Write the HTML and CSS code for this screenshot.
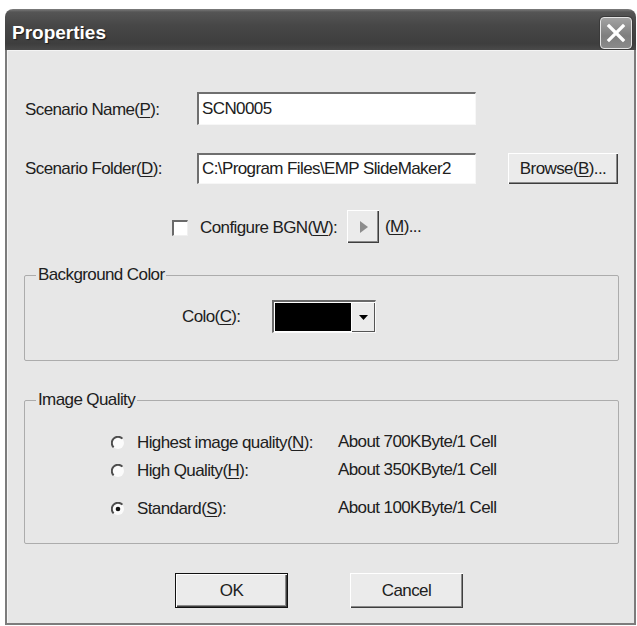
FILE: index.html
```html
<!DOCTYPE html>
<html lang="en">
<head>
<meta charset="utf-8">
<title>Properties</title>
<link rel="stylesheet" href="styles.css">
</head>
<body>
<div class="window">
  <div class="titlebar">
    <span class="title">Properties</span>
    <button class="close" type="button" aria-label="Close">
      <svg width="30" height="30" viewBox="0 0 30 30">
        <path d="M8 8 L22 22 M22 8 L8 22" stroke="#fff" stroke-width="3.2" stroke-linecap="square" fill="none"/>
      </svg>
    </button>
  </div>

  <div class="client">
    <div class="fields">
      <span class="lbl">Scenario Name(<u>P</u>):</span>
      <div class="edit">SCN0005</div>
      <span></span>
      <span class="lbl">Scenario Folder(<u>D</u>):</span>
      <div class="edit">C:\Program Files\EMP SlideMaker2</div>
      <button class="btn browse" type="button">Browse(<u>B</u>)...</button>
    </div>

    <div class="bgm-row">
      <span class="checkbox"></span>
      <span class="lbl bgm-label">Configure BGN(<u>W</u>):</span>
      <button class="btn play" type="button" aria-label="Play">
        <svg width="10" height="14" viewBox="0 0 10 14"><path d="M1 1 L9 7 L1 13 Z" fill="#8c8c8c"/></svg>
      </button>
      <span class="lbl">(<u>M</u>)...</span>
    </div>

    <fieldset class="group group-color">
      <legend>Background Color</legend>
      <div class="color-row">
        <span class="lbl color-label">Colo(<u>C</u>):</span>
        <div class="combo">
          <span class="swatch"></span>
          <span class="drop">
            <svg width="9" height="5" viewBox="0 0 9 5"><path d="M0 0 H9 L4.5 5 Z" fill="#000"/></svg>
          </span>
        </div>
      </div>
    </fieldset>

    <fieldset class="group group-quality">
      <legend>Image Quality</legend>
      <div class="quality">
        <span class="option">
          <svg class="radio" width="14" height="14" viewBox="0 0 14 14"><circle cx="7" cy="7" r="6" fill="#fbfbfb"/><path d="M11.4 2.6 A6.2 6.2 0 0 0 2.6 11.4" stroke="#4e4e4e" stroke-width="2" fill="none"/></svg>
          <span class="lbl">Highest image quality(<u>N</u>):</span>
        </span>
        <span class="lbl size">About 700KByte/1 Cell</span>
        <span class="option">
          <svg class="radio" width="14" height="14" viewBox="0 0 14 14"><circle cx="7" cy="7" r="6" fill="#fbfbfb"/><path d="M11.4 2.6 A6.2 6.2 0 0 0 2.6 11.4" stroke="#4e4e4e" stroke-width="2" fill="none"/></svg>
          <span class="lbl">High Quality(<u>H</u>):</span>
        </span>
        <span class="lbl size">About 350KByte/1 Cell</span>
        <span class="option">
          <svg class="radio" width="14" height="14" viewBox="0 0 14 14"><circle cx="7" cy="7" r="6" fill="#fbfbfb"/><path d="M11.4 2.6 A6.2 6.2 0 0 0 2.6 11.4" stroke="#4e4e4e" stroke-width="2" fill="none"/><circle cx="7" cy="7" r="2.3" fill="#111"/></svg>
          <span class="lbl">Standard(<u>S</u>):</span>
        </span>
        <span class="lbl size">About 100KByte/1 Cell</span>
      </div>
    </fieldset>

    <div class="actions">
      <button class="btn push default" type="button">OK</button>
      <button class="btn push" type="button">Cancel</button>
    </div>
  </div>
</div>
</body>
</html>
```

FILE: styles.css
```css
html, body {
  margin: 0;
  padding: 0;
  background: #ffffff;
}

body {
  font-family: "Liberation Sans", Arial, sans-serif;
  font-size: 17px;
  letter-spacing: -0.6px;
  color: #202020;
}

u {
  text-decoration: underline;
  text-underline-offset: 2px;
}

/* ---- window frame ---- */
.window {
  margin: 9px 1px 0 5px;
  width: 631px;
  display: flex;
  flex-direction: column;
}

.titlebar {
  height: 41px;
  box-sizing: border-box;
  display: flex;
  align-items: flex-end;
  justify-content: space-between;
  padding: 0 4px 1px 7px;
  border-radius: 8px 8px 0 0;
  background: linear-gradient(#7e7e7e 0, #555555 3px, #474747 40%, #3e3e3e 85%, #4a4a4a 100%);
}

.title {
  font-weight: bold;
  font-size: 19px;
  letter-spacing: 0;
  line-height: 22px;
  color: #ffffff;
  text-shadow: 1px 1px 1px #1c1c1c;
  margin-bottom: 5px;
}

.close {
  width: 32px;
  height: 32px;
  padding: 0;
  margin: 0;
  border: 1px solid #e4e4e4;
  border-radius: 4px;
  background: linear-gradient(#a2a2a2, #7e7e7e 60%, #8a8a8a);
  box-shadow: 0 0 0 1px #3a3a3a;
  display: flex;
  align-items: center;
  justify-content: center;
}

.close svg { display: block; }

.client {
  background: #e7e7e7;
  border: 2px solid #7c7c7c;
  border-top: 0;
  box-shadow: inset 1px 1px 0 #f4f4f4;
  padding: 42px 16px 15px 18px;
  display: flex;
  flex-direction: column;
  align-items: flex-start;
}

.lbl {
  line-height: 22px;
  white-space: nowrap;
}

/* ---- top form rows ---- */
.fields {
  display: grid;
  grid-template-columns: 172px 279px 142px;
  grid-template-rows: 33px 31px;
  row-gap: 28px;
  align-items: center;
}

.fields > .lbl:first-child { margin-top: 3px; }

.edit {
  height: 100%;
  box-sizing: border-box;
  background: #ffffff;
  border-top: 2px solid #6f6f6f;
  border-left: 2px solid #6f6f6f;
  border-right: 1px solid #f7f7f7;
  border-bottom: 1px solid #f7f7f7;
  padding: 0 3px;
  display: flex;
  align-items: center;
  line-height: 22px;
  white-space: nowrap;
}

.btn {
  font: inherit;
  letter-spacing: inherit;
  color: inherit;
  background: #ebebeb;
  border: 0;
  margin: 0;
  padding: 0;
  box-shadow:
    inset 1px 1px 0 #ffffff,
    inset -1px -1px 0 #3e3e3e,
    inset -2px -2px 0 #8a8a8a;
  display: flex;
  align-items: center;
  justify-content: center;
  white-space: nowrap;
}

.browse {
  justify-self: end;
  height: 31px;
  width: 110px;
}

/* ---- background music row ---- */
.bgm-row {
  margin-top: 26px;
  padding-left: 147px;
  display: flex;
  align-items: center;
}

.checkbox {
  width: 16px;
  height: 16px;
  flex-shrink: 0;
  box-sizing: border-box;
  background: #ffffff;
  border-top: 2px solid #6a6a6a;
  border-left: 2px solid #6a6a6a;
  border-right: 1px solid #f0f0f0;
  border-bottom: 1px solid #f0f0f0;
  margin-top: 2px;
}

.bgm-label {
  width: 147px;
  margin-left: 12px;
  margin-top: 2px;
}

.play {
  width: 32px;
  height: 33px;
  margin-right: 6px;
}

.play svg { display: block; margin-left: 2px; }

/* ---- group boxes ---- */
.group {
  margin: 0;
  padding: 0;
  width: 595px;
  box-sizing: border-box;
  min-inline-size: 0;
  border: 1px solid #acacac;
  border-radius: 2px;
}

.group legend {
  margin-left: 11px;
  padding: 0 2px;
  line-height: 22px;
}

.group-color {
  margin-top: 21px;
  margin-left: -1px;
}

.color-row {
  padding: 14px 0 27px 157px;
  display: flex;
  align-items: center;
}

.color-label { width: 90px; }

.combo {
  width: 104px;
  height: 33px;
  box-sizing: border-box;
  border-top: 2px solid #6a6a6a;
  border-left: 2px solid #6a6a6a;
  border-right: 1px solid #fafafa;
  border-bottom: 1px solid #fafafa;
  display: flex;
  background: #ffffff;
}

.swatch {
  flex: 1;
  background: #000000;
  margin: 1px 0 1px 1px;
}

.drop {
  width: 24px;
  background: #ebebeb;
  box-shadow:
    inset 1px 1px 0 #ffffff,
    inset -1px -1px 0 #555555;
  display: flex;
  align-items: center;
  justify-content: center;
}

.group-quality {
  margin-top: 28px;
  margin-left: -1px;
}

.quality {
  display: grid;
  grid-template-columns: 227px auto;
  grid-template-rows: 28px 38px 22px;
  align-items: start;
  padding: 21px 0 23px 86px;
}

.option {
  display: flex;
  align-items: center;
  gap: 12px;
}

.radio {
  display: block;
  flex-shrink: 0;
}

.size { margin-top: -1px; }

/* ---- dialog buttons ---- */
.actions {
  margin-top: 29px;
  padding-left: 151px;
  display: flex;
  align-items: center;
  gap: 63px;
}

.push {
  width: 113px;
  height: 35px;
}

.push.default {
  width: 111px;
  height: 33px;
  outline: 1px solid #111111;
}
```
